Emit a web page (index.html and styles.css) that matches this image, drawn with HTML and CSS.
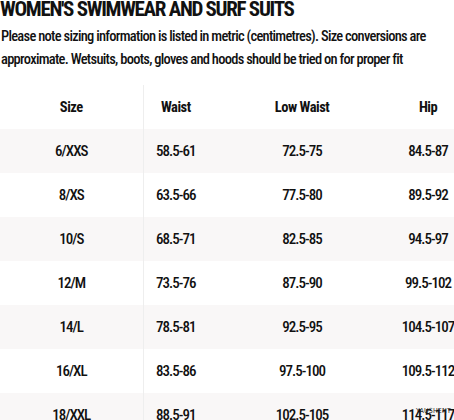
FILE: index.html
```html
<!DOCTYPE html>
<html>
<head>
<meta charset="utf-8">
<link rel="stylesheet" href="styles.css">
</head>
<body>
<div class="page">
  <h1 class="title">WOMEN'S SWIMWEAR AND SURF SUITS</h1>
  <p class="intro">Please note sizing information is listed in metric (centimetres). Size conversions are approximate. Wetsuits, boots, gloves and hoods should be tried on for proper fit</p>
  <table class="sizes">
    <colgroup>
      <col class="c1"><col class="c2"><col class="c3"><col class="c4">
    </colgroup>
    <thead>
      <tr><th class="first">Size</th><th>Waist</th><th>Low Waist</th><th>Hip</th></tr>
    </thead>
    <tbody>
      <tr class="shade"><td class="first">6/XXS</td><td>58.5-61</td><td>72.5-75</td><td>84.5-87</td></tr>
      <tr><td class="first">8/XS</td><td>63.5-66</td><td>77.5-80</td><td>89.5-92</td></tr>
      <tr class="shade"><td class="first">10/S</td><td>68.5-71</td><td>82.5-85</td><td>94.5-97</td></tr>
      <tr><td class="first">12/M</td><td>73.5-76</td><td>87.5-90</td><td>99.5-102</td></tr>
      <tr class="shade"><td class="first">14/L</td><td>78.5-81</td><td>92.5-95</td><td>104.5-107</td></tr>
      <tr><td class="first">16/XL</td><td>83.5-86</td><td>97.5-100</td><td>109.5-112</td></tr>
      <tr class="shade"><td class="first">18/XXL</td><td>88.5-91</td><td>102.5-105</td><td>114.5-117</td></tr>
    </tbody>
  </table>
  <span class="mark">YAUSHENT</span>
</div>
</body>
</html>
```
FILE: styles.css
```css
html, body {
  margin: 0;
  padding: 0;
  background: #fff;
}
body {
  font-family: "Roboto Condensed", "Open Sans", sans-serif;
  font-stretch: 75%;
  color: #111;
  overflow: hidden;
}
.page {
  width: 454px;
  height: 420px;
  overflow: hidden;
  position: relative;
}
.title {
  margin: -3px 0 0 0;
  font-size: 21px;
  line-height: 24px;
  font-weight: 700;
  letter-spacing: -1.3px;
  white-space: nowrap;
}
.intro {
  margin: 4px 0 0 1px;
  font-size: 14.5px;
  line-height: 23px;
  font-weight: 500;
  letter-spacing: -0.72px;
}
.sizes {
  border-collapse: collapse;
  table-layout: fixed;
  width: 460px;
  margin-top: 14px;
}
.c1 { width: 143px; }
.c2 { width: 65px; }
.c3 { width: 188px; }
.c4 { width: 64px; }
.sizes th, .sizes td {
  height: 44px;
  padding: 0;
  text-align: center;
  white-space: nowrap;
  font-size: 15px;
  font-weight: 500;
  letter-spacing: -1px;
}
.sizes th {
  font-weight: 700;
  font-size: 14.5px;
  letter-spacing: -0.5px;
}
.sizes .first {
  border-right: 1px solid #eeeeee;
}
.shade td {
  background: #f9f7f7;
}
.mark {
  position: absolute;
  right: 3px;
  bottom: 5px;
  font-size: 7px;
  letter-spacing: 0.2px;
  color: #222;
  font-family: "DejaVu Sans", sans-serif;
}
```
